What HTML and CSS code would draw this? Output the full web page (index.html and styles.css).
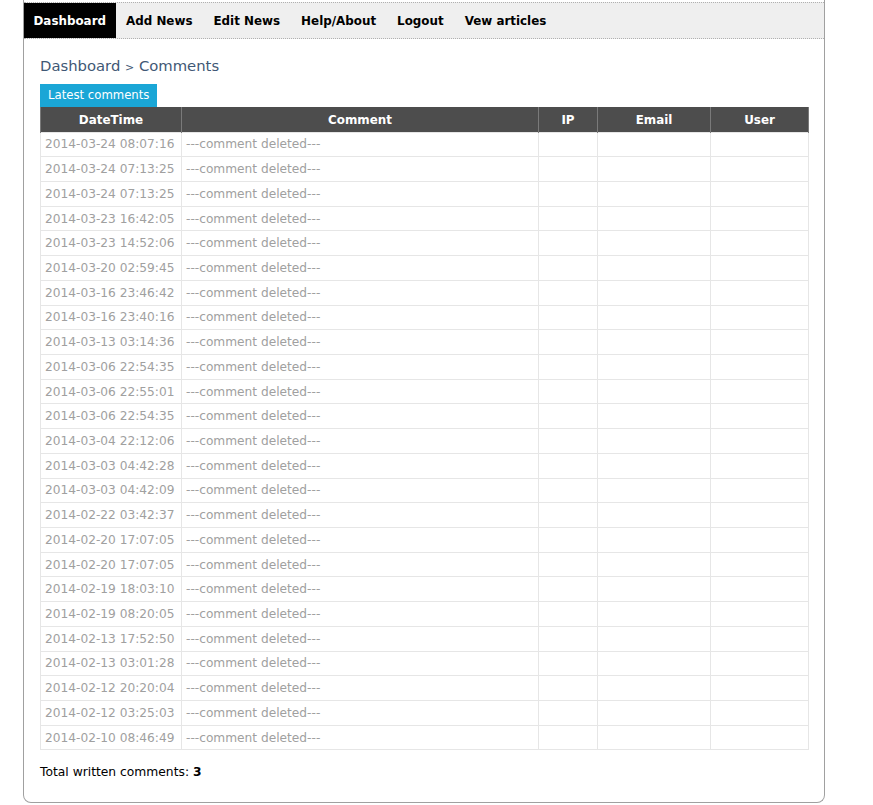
FILE: index.html
```html
<!DOCTYPE html>
<html>
<head>
<meta charset="utf-8">
<title>Comments</title>
<link rel="stylesheet" href="styles.css">
</head>
<body>
<div class="wrap">
  <ul class="nav">
    <li class="active"><a href="#">Dashboard</a></li>
    <li><a href="#">Add News</a></li>
    <li><a href="#">Edit News</a></li>
    <li><a href="#">Help/About</a></li>
    <li><a href="#">Logout</a></li>
    <li><a href="#">Vew articles</a></li>
  </ul>
  <div class="content">
    <div class="crumb">Dashboard <span class="sep">&gt;</span> Comments</div>
    <div class="tab">Latest comments</div>
    <table class="grid">
      <thead>
        <tr><th class="c-date">DateTime</th><th class="c-com">Comment</th><th class="c-ip">IP</th><th class="c-mail">Email</th><th class="c-user">User</th></tr>
      </thead>
      <tbody>
        <tr><td>2014-03-24 08:07:16</td><td>---comment deleted---</td><td></td><td></td><td></td></tr>
        <tr><td>2014-03-24 07:13:25</td><td>---comment deleted---</td><td></td><td></td><td></td></tr>
        <tr><td>2014-03-24 07:13:25</td><td>---comment deleted---</td><td></td><td></td><td></td></tr>
        <tr><td>2014-03-23 16:42:05</td><td>---comment deleted---</td><td></td><td></td><td></td></tr>
        <tr><td>2014-03-23 14:52:06</td><td>---comment deleted---</td><td></td><td></td><td></td></tr>
        <tr><td>2014-03-20 02:59:45</td><td>---comment deleted---</td><td></td><td></td><td></td></tr>
        <tr><td>2014-03-16 23:46:42</td><td>---comment deleted---</td><td></td><td></td><td></td></tr>
        <tr><td>2014-03-16 23:40:16</td><td>---comment deleted---</td><td></td><td></td><td></td></tr>
        <tr><td>2014-03-13 03:14:36</td><td>---comment deleted---</td><td></td><td></td><td></td></tr>
        <tr><td>2014-03-06 22:54:35</td><td>---comment deleted---</td><td></td><td></td><td></td></tr>
        <tr><td>2014-03-06 22:55:01</td><td>---comment deleted---</td><td></td><td></td><td></td></tr>
        <tr><td>2014-03-06 22:54:35</td><td>---comment deleted---</td><td></td><td></td><td></td></tr>
        <tr><td>2014-03-04 22:12:06</td><td>---comment deleted---</td><td></td><td></td><td></td></tr>
        <tr><td>2014-03-03 04:42:28</td><td>---comment deleted---</td><td></td><td></td><td></td></tr>
        <tr><td>2014-03-03 04:42:09</td><td>---comment deleted---</td><td></td><td></td><td></td></tr>
        <tr><td>2014-02-22 03:42:37</td><td>---comment deleted---</td><td></td><td></td><td></td></tr>
        <tr><td>2014-02-20 17:07:05</td><td>---comment deleted---</td><td></td><td></td><td></td></tr>
        <tr><td>2014-02-20 17:07:05</td><td>---comment deleted---</td><td></td><td></td><td></td></tr>
        <tr><td>2014-02-19 18:03:10</td><td>---comment deleted---</td><td></td><td></td><td></td></tr>
        <tr><td>2014-02-19 08:20:05</td><td>---comment deleted---</td><td></td><td></td><td></td></tr>
        <tr><td>2014-02-13 17:52:50</td><td>---comment deleted---</td><td></td><td></td><td></td></tr>
        <tr><td>2014-02-13 03:01:28</td><td>---comment deleted---</td><td></td><td></td><td></td></tr>
        <tr><td>2014-02-12 20:20:04</td><td>---comment deleted---</td><td></td><td></td><td></td></tr>
        <tr><td>2014-02-12 03:25:03</td><td>---comment deleted---</td><td></td><td></td><td></td></tr>
        <tr><td>2014-02-10 08:46:49</td><td>---comment deleted---</td><td></td><td></td><td></td></tr>
      </tbody>
    </table>
    <p class="total">Total written comments: <b>3</b></p>
  </div>
</div>
</body>
</html>
```
FILE: styles.css
```css
html, body {
  margin: 0;
  padding: 0;
  background: #ffffff;
}
body {
  font-family: "DejaVu Sans", Verdana, sans-serif;
  font-size: 12px;
  color: #000;
}
.wrap {
  margin-left: 23px;
  width: 802px;
  height: 803px;
  box-sizing: border-box;
  border: 1px solid #a0a0a0;
  border-top: none;
  border-radius: 0 0 8px 8px;
  padding-top: 2px;
}
.nav {
  list-style: none;
  margin: 0;
  padding: 0;
  display: flex;
  background: #efefef;
  border-top: 1px dotted #b0b0b0;
  border-bottom: 1px dotted #b0b0b0;
  height: 35px;
}
.nav li a {
  display: block;
  height: 33px;
  line-height: 33px;
  padding: 2px 10.5px 0;
  color: #000;
  font-weight: bold;
  font-size: 11.9px;
  text-decoration: none;
}
.nav li.active a {
  background: #000;
  color: #fff;
  padding: 2px 9.5px 0;
}
.content {
  padding: 0 16px;
}
.crumb {
  margin-top: 17px;
  font-size: 14.8px;
  line-height: 20px;
  color: #3f5875;
}
.crumb .sep {
  font-size: 11px;
}
.tab {
  display: inline-block;
  margin-top: 6px;
  background: #1aa6d6;
  color: #fff;
  font-size: 11.7px;
  line-height: 23px;
  height: 23px;
  padding: 0 8px;
}
.grid {
  width: 768px;
  border-collapse: collapse;
  table-layout: fixed;
}
.grid th {
  background: #4d4d4d;
  color: #fff;
  font-weight: bold;
  font-size: 11.9px;
  height: 25px;
  padding: 1px 0 0;
  border: 1px solid #7a7a7a;
  border-top: none;
  border-bottom: none;
  text-align: center;
  box-sizing: border-box;
}
.grid .c-date { width: 141px; }
.grid .c-com { width: 357px; }
.grid .c-ip { width: 59px; }
.grid .c-mail { width: 113px; }
.grid .c-user { width: 98px; }
.grid td {
  border: 1px solid #e6e6e6;
  color: #a0a0a0;
  height: 23.72px;
  padding: 0 4px;
  white-space: nowrap;
  overflow: hidden;
  font-size: 12.2px;
}
.total {
  margin: 14px 0 0;
  font-size: 12.3px;
  line-height: 16px;
}
```
